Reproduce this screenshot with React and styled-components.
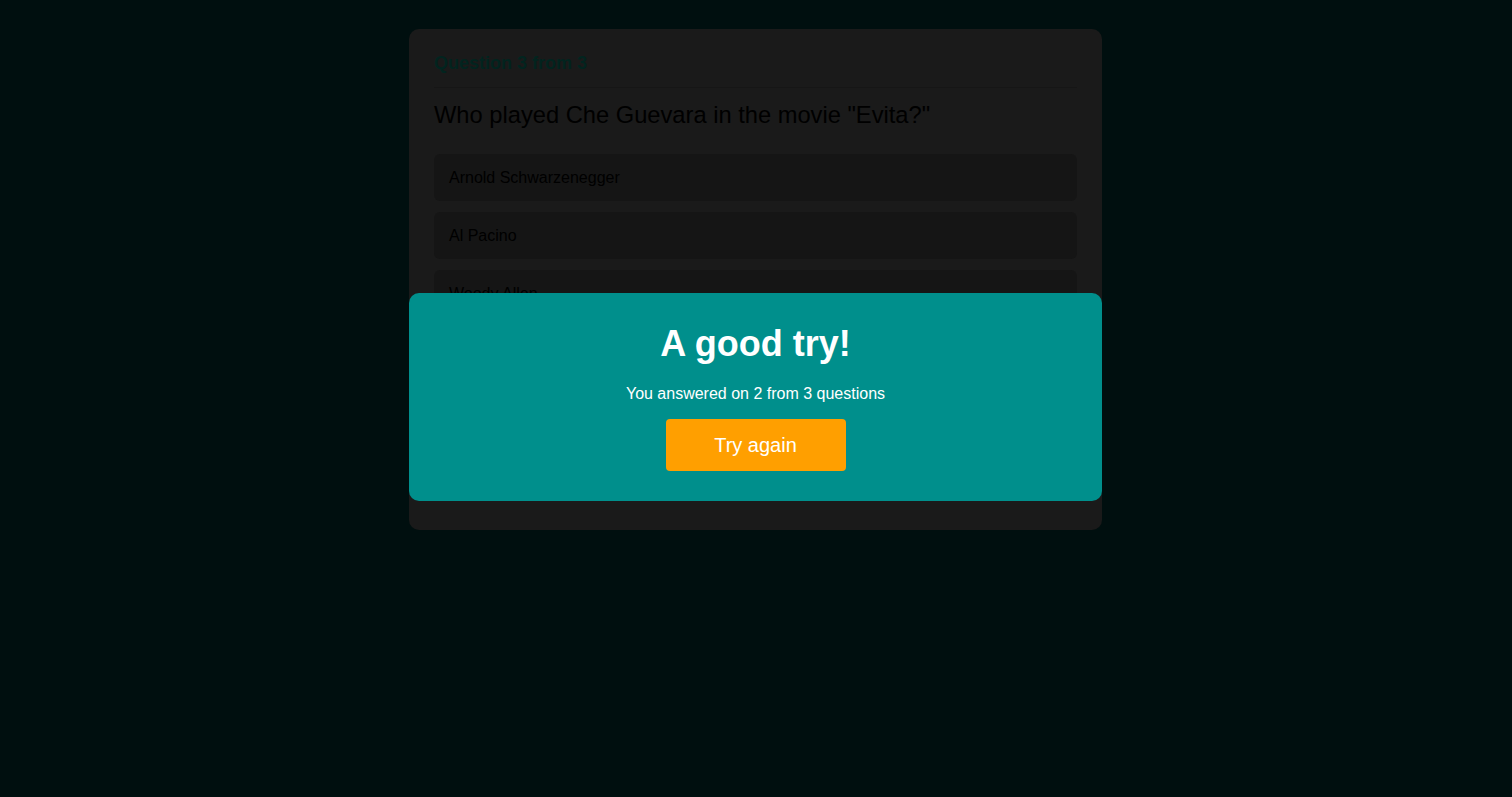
import React from "react";
import styled, { createGlobalStyle } from "styled-components";

const GlobalStyle = createGlobalStyle`
  html, body {
    margin: 0;
    padding: 0;
    background: #000f0f;
    font-family: "Liberation Sans", Arial, sans-serif;
  }
`;

const question = {
  title: 'Who played Che Guevara in the movie "Evita?"',
  variants: ["Arnold Schwarzenegger", "Al Pacino", "Woody Allen", "Antonio Banderas"],
};

export default function App() {
  return (
    <Page>
      <GlobalStyle />
      <Card>
        <Header>Question 3 from 3</Header>
        <Title>{question.title}</Title>
        <Variants>
          {question.variants.map((v) => (
            <Variant key={v}>{v}</Variant>
          ))}
        </Variants>
      </Card>
      <Overlay>
        <Modal>
          <ModalTitle>A good try!</ModalTitle>
          <ModalText>You answered on 2 from 3 questions</ModalText>
          <Button>Try again</Button>
        </Modal>
      </Overlay>
    </Page>
  );
}

const Page = styled.div`
  min-height: 797px;
  display: flex;
  justify-content: center;
  align-items: flex-start;
  padding: 29px 1px 0 0;
  box-sizing: border-box;
`;

const Card = styled.div`
  width: 693px;
  height: 501px;
  box-sizing: border-box;
  background: #1a1a1a;
  border-radius: 10px;
  padding: 22px 25px 25px;
`;

const Header = styled.div`
  color: #02241f;
  font-weight: 700;
  font-size: 18px;
  line-height: 24px;
  padding-bottom: 12px;
  border-bottom: 1px solid #161616;
`;

const Title = styled.h2`
  margin: 12px 0 24px;
  color: #000;
  font-weight: 400;
  font-size: 23.7px;
  line-height: 30px;
`;

const Variants = styled.ul`
  list-style: none;
  margin: 0;
  padding: 0;
  display: flex;
  flex-direction: column;
  gap: 11px;
`;

const Variant = styled.li`
  height: 47px;
  display: flex;
  align-items: center;
  padding: 0 15px;
  background: #151515;
  border-radius: 6px;
  color: #000;
  font-size: 16px;
`;

const Overlay = styled.div`
  position: fixed;
  inset: 0;
  padding: 0 1px 3px 0;
  display: flex;
  align-items: center;
  justify-content: center;
`;

const Modal = styled.div`
  width: 693px;
  height: 208px;
  box-sizing: border-box;
  background: #008f8c;
  border-radius: 10px;
  padding: 30px 20px;
  display: flex;
  flex-direction: column;
  align-items: center;
`;

const ModalTitle = styled.h1`
  margin: 0;
  color: #fff;
  font-weight: 700;
  font-size: 36px;
  line-height: 42px;
`;

const ModalText = styled.p`
  margin: 20px 0 16px;
  color: #fff;
  font-size: 16px;
  line-height: 18px;
`;

const Button = styled.button`
  width: 180px;
  height: 52px;
  border: none;
  border-radius: 4px;
  background: #ff9f00;
  color: #fff;
  font-family: "Liberation Sans", Arial, sans-serif;
  font-size: 20px;
  cursor: pointer;
`;
